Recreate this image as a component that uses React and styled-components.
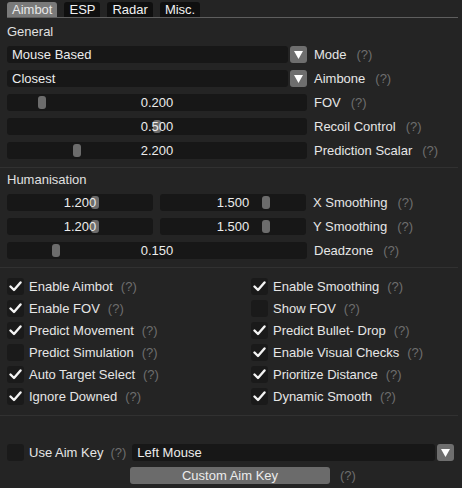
import React from "react";
import styled, { createGlobalStyle } from "styled-components";

const Global = createGlobalStyle`
  html, body { margin: 0; padding: 0; background: #242424; }
  body { width: 462px; height: 488px; overflow: hidden; }
  * { box-sizing: border-box; }
`;

const Win = styled.div`
  width: 462px;
  height: 488px;
  background: #242424;
  color: #e6e6e6;
  font-family: "Liberation Sans", Arial, sans-serif;
  font-size: 13px;
  padding: 2px 4px 0 7px;
  display: flex;
  flex-direction: column;
`;

const TabBar = styled.div`
  display: flex;
  gap: 7px;
  height: 16px;
  border-bottom: 1px solid #5e5e5e;
`;

const Tab = styled.div`
  height: 15px;
  padding: 0 5px;
  display: flex;
  align-items: center;
  border-radius: 3px 3px 0 0;
  background: ${(p) => (p.$active ? "#7a7a7a" : "#0f0f0f")};
  color: ${(p) => (p.$active ? "#e8e8e8" : "#f2f2f2")};
  font-size: 13px;
  line-height: 15px;
`;

const Title = styled.div`
  height: 14px;
  line-height: 14px;
  margin-top: ${(p) => p.$mt || 6}px;
  margin-bottom: 7px;
  color: #e0e0e0;
`;

const Row = styled.div`
  display: flex;
  align-items: center;
  height: 17px;
  margin-bottom: 7px;
  gap: 7px;
`;

const Field = styled.div`
  width: ${(p) => p.$w || 300}px;
  height: 17px;
  display: flex;
  gap: 2px;
  flex: none;
  margin-left: ${(p) => p.$ml || 0}px;
`;

const Frame = styled.div`
  position: relative;
  flex: 1;
  height: 17px;
  background: #171717;
  border-radius: 3px;
  display: flex;
  align-items: center;
  justify-content: ${(p) => (p.$center ? "center" : "flex-start")};
  padding: 0 5px;
  color: #ececec;
  line-height: 17px;
`;

const ArrowBtn = styled.div`
  width: 17px;
  height: 17px;
  background: #6e6e6e;
  border-radius: 3px;
  display: flex;
  align-items: center;
  justify-content: center;
  flex: none;
`;

const Grab = styled.div`
  position: absolute;
  top: 2px;
  width: 8px;
  height: 13px;
  border-radius: 3px;
  background: #6c6c6c;
`;

const Value = styled.span`
  position: relative;
  z-index: 1;
`;

const Label = styled.span`
  color: #e6e6e6;
  white-space: nowrap;
`;

const Help = styled.span`
  color: #6e6e6e;
  margin-left: ${(p) => p.$ml ?? 10}px;
  white-space: nowrap;
`;

const Sep = styled.div`
  height: 1px;
  background: #313131;
  margin: ${(p) => p.$m || "0"};
`;

const Checks = styled.div`
  display: grid;
  grid-template-columns: 244px 1fr;
  margin-top: 10px;
`;

const Col = styled.div`
  display: flex;
  flex-direction: column;
  gap: 5px;
`;

const CheckRow = styled.div`
  display: flex;
  align-items: center;
  height: 17px;
  gap: 5px;
`;

const Box = styled.div`
  width: 17px;
  height: 17px;
  border-radius: 3px;
  background: #1a1a1a;
  display: flex;
  align-items: center;
  justify-content: center;
  flex: none;
`;

const Bottom = styled.div`
  display: flex;
  flex-direction: column;
  margin-top: 28px;
`;

const BtnRow = styled.div`
  display: flex;
  align-items: center;
  height: 17px;
  margin-top: 6px;
  padding-left: 123px;
`;

const Button = styled.div`
  width: 200px;
  height: 17px;
  border-radius: 3px;
  background: #6b6b6b;
  color: #ececec;
  display: flex;
  align-items: center;
  justify-content: center;
`;

const Tri = () => (
  <svg width="9" height="8" viewBox="0 0 9 8">
    <polygon points="0,0 9,0 4.5,8" fill="#ffffff" />
  </svg>
);

const Check = () => (
  <svg width="13" height="11" viewBox="0 0 13 11">
    <polyline points="1.5,5.5 5,9 11.5,1.5" fill="none" stroke="#f4f4f4" strokeWidth="2.4" strokeLinecap="round" strokeLinejoin="round" />
  </svg>
);

const Combo = ({ text, w, ml }) => (
  <Field $w={w} $ml={ml}>
    <Frame>{text}</Frame>
    <ArrowBtn>
      <Tri />
    </ArrowBtn>
  </Field>
);

const Slider = ({ value, pos, w }) => (
  <Field $w={w}>
    <Frame $center>
      <Grab style={{ left: `${pos}px` }} />
      <Value>{value}</Value>
    </Frame>
  </Field>
);

const CheckItem = ({ on, label, ml }) => (
  <CheckRow>
    <Box>{on && <Check />}</Box>
    <Label>{label}</Label>
    <Help $ml={ml ?? 3}>(?)</Help>
  </CheckRow>
);

const left = [
  [true, "Enable Aimbot"],
  [true, "Enable FOV"],
  [true, "Predict Movement"],
  [false, "Predict Simulation"],
  [true, "Auto Target Select"],
  [true, "Ignore Downed"],
];
const right = [
  [true, "Enable Smoothing"],
  [false, "Show FOV"],
  [true, "Predict Bullet- Drop"],
  [true, "Enable Visual Checks"],
  [true, "Prioritize Distance"],
  [true, "Dynamic Smooth"],
];

export default function App() {
  return (
    <>
      <Global />
      <Win>
        <TabBar>
          <Tab $active>Aimbot</Tab>
          <Tab>ESP</Tab>
          <Tab>Radar</Tab>
          <Tab>Misc.</Tab>
        </TabBar>
        <Title $mt={7}>General</Title>
        <Row>
          <Combo text="Mouse Based" />
          <Label>Mode</Label>
          <Help $ml={3}>(?)</Help>
        </Row>
        <Row>
          <Combo text="Closest" />
          <Label>Aimbone</Label>
          <Help $ml={3}>(?)</Help>
        </Row>
        <Row>
          <Slider value="0.200" pos={31} />
          <Label>FOV</Label>
          <Help $ml={3}>(?)</Help>
        </Row>
        <Row>
          <Slider value="0.500" pos={146} />
          <Label>Recoil Control</Label>
          <Help $ml={3}>(?)</Help>
        </Row>
        <Row>
          <Slider value="2.200" pos={66} />
          <Label>Prediction Scalar</Label>
          <Help $ml={3}>(?)</Help>
        </Row>
        <Sep $m="1px 0 0 -7px" />
        <Title $mt={5}>Humanisation</Title>
        <Row>
          <Slider value="1.200" pos={84} w={146} />
          <Slider value="1.500" pos={102} w={146} />
          <Label>X Smoothing</Label>
          <Help $ml={3}>(?)</Help>
        </Row>
        <Row>
          <Slider value="1.200" pos={84} w={146} />
          <Slider value="1.500" pos={102} w={146} />
          <Label>Y Smoothing</Label>
          <Help $ml={3}>(?)</Help>
        </Row>
        <Row>
          <Slider value="0.150" pos={45} />
          <Label>Deadzone</Label>
          <Help $ml={3}>(?)</Help>
        </Row>
        <Sep $m="1px 0 0 -7px" />
        <Checks>
          <Col>
            {left.map(([on, l]) => (
              <CheckItem key={l} on={on} label={l} />
            ))}
          </Col>
          <Col>
            {right.map(([on, l]) => (
              <CheckItem key={l} on={on} label={l} />
            ))}
          </Col>
        </Checks>
        <Sep $m="10px 0 0 -7px" />
        <Bottom>
          <CheckRow>
            <Box />
            <Label>Use Aim Key</Label>
            <Help $ml={2}>(?)</Help>
            <Combo text="Left Mouse" w={322} ml={1} />
          </CheckRow>
          <BtnRow>
            <Button>Custom Aim Key</Button>
            <Help $ml={10}>(?)</Help>
          </BtnRow>
        </Bottom>
      </Win>
    </>
  );
}
